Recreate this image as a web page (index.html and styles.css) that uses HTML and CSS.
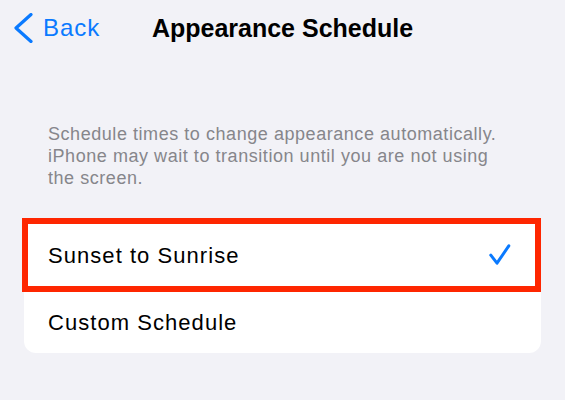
FILE: index.html
```html
<!DOCTYPE html>
<html lang="en">
<head>
<meta charset="utf-8">
<title>Appearance Schedule</title>
<link rel="stylesheet" href="styles.css">
</head>
<body>
<header class="nav">
  <a class="back">
    <svg class="chev" width="20" height="30" viewBox="0 0 20 30"><path d="M18 1.5 L3 15 L18 28.5" fill="none" stroke="#0a7aff" stroke-width="3.2" stroke-linecap="round" stroke-linejoin="round"/></svg>
    <span class="back-label">Back</span>
  </a>
  <h1 class="title">Appearance Schedule</h1>
  <div class="spacer"></div>
</header>
<p class="footnote">Schedule times to change appearance automatically.<br>iPhone may wait to transition until you are not using<br>the screen.</p>
<div class="card">
  <div class="row selected">
    <span class="label">Sunset to Sunrise</span>
    <svg class="check" width="24" height="24" viewBox="0 0 24 24"><path d="M2.8 12.2 L9 20.2 L20.8 2.8" fill="none" stroke="#0a7aff" stroke-width="3" stroke-linecap="round" stroke-linejoin="round"/></svg>
  </div>
  <div class="row">
    <span class="label">Custom Schedule</span>
  </div>
  <div class="highlight"></div>
</div>
</body>
</html>
```
FILE: styles.css
```css
html, body {
  margin: 0;
  padding: 0;
}
body {
  background: #f2f2f7;
  font-family: "Liberation Sans", Arial, sans-serif;
  width: 565px;
  height: 400px;
  overflow: hidden;
}
.nav {
  height: 55px;
  display: grid;
  grid-template-columns: 1fr auto 1fr;
  align-items: center;
}
.back {
  display: flex;
  align-items: center;
  gap: 10px;
  padding-left: 13px;
  color: #0a7aff;
  font-size: 24px;
  line-height: 28px;
}
.back-label {
  letter-spacing: 1px;
}
.chev {
  display: block;
  margin-top: 1px;
}
.title {
  margin: 0;
  font-size: 25px;
  line-height: 28px;
  font-weight: bold;
  color: #000;
}
.footnote {
  margin: 68px 0 0;
  padding-left: 48px;
  font-size: 18px;
  line-height: 22px;
  letter-spacing: 0.55px;
  color: #86868b;
}
.card {
  position: relative;
  margin: 32px 24px 0;
  background: #fff;
  border-radius: 12px;
}
.row {
  height: 66px;
  display: flex;
  align-items: center;
  justify-content: space-between;
  padding: 0 29px 0 24px;
  box-sizing: border-box;
}
.selected {
  border-bottom: 1px solid #c6c6c8;
}
.label {
  font-size: 22px;
  line-height: 26px;
  letter-spacing: 1.05px;
  color: #000;
  margin-top: 5px;
}
.check {
  display: block;
  margin-top: 2px;
}
.highlight {
  position: absolute;
  top: -3px;
  left: -2px;
  right: 0;
  height: 74px;
  box-sizing: border-box;
  border: 6.5px solid #fe2600;
}
```
